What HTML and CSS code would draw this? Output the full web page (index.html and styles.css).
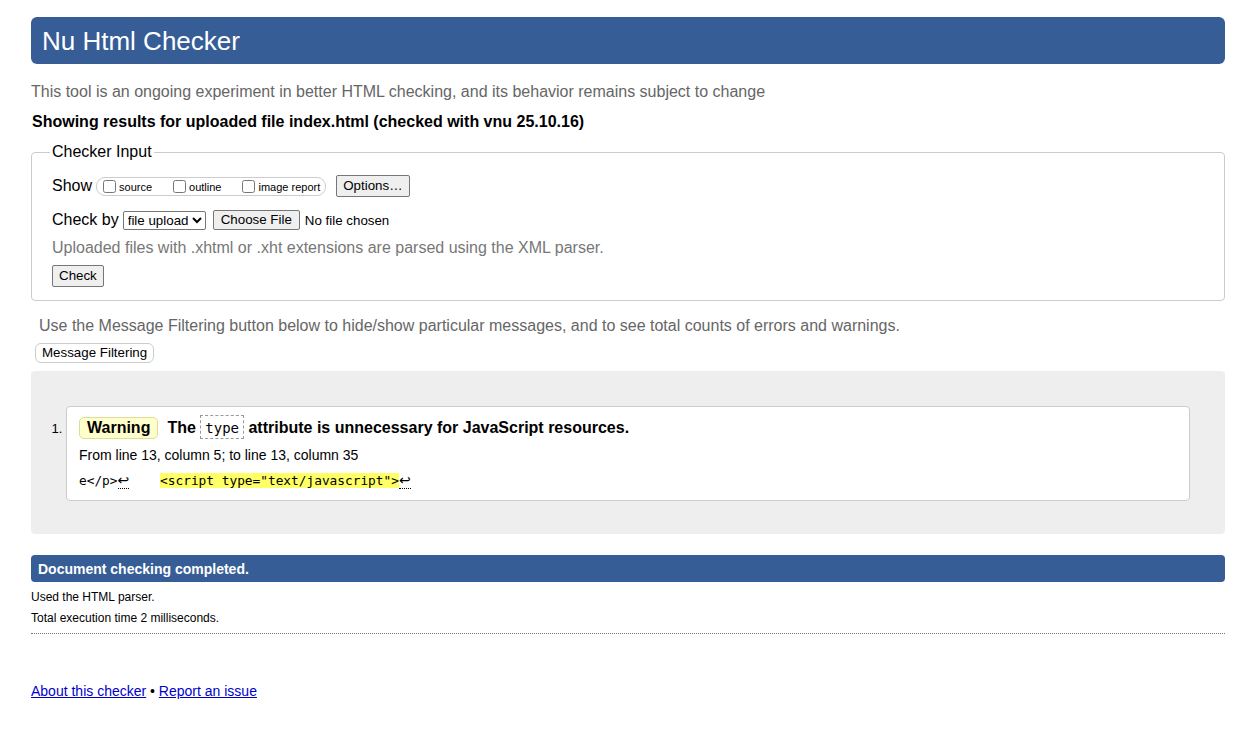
FILE: index.html
```html
<!DOCTYPE html>
<html lang="en">
<head>
<meta charset="utf-8">
<title>Showing results for index.html - Nu Html Checker</title>
<link rel="stylesheet" href="styles.css">
</head>
<body>
<header class="masthead"><h1>Nu Html Checker</h1></header>
<p class="intro">This tool is an ongoing experiment in better HTML checking, and its behavior remains subject to change</p>
<p class="showing">Showing results for uploaded file index.html (checked with vnu 25.10.16)</p>
<fieldset class="input">
  <legend>Checker Input</legend>
  <div class="row">
    <span class="lbl">Show</span>
    <span class="group">
      <label><input type="checkbox">source</label>
      <label><input type="checkbox">outline</label>
      <label><input type="checkbox">image report</label>
    </span>
    <button class="btn">Options…</button>
  </div>
  <div class="row row2">
    <span class="lbl">Check by</span>
    <select class="sel"><option>file upload</option></select>
    <span class="btn file">Choose File</span>
    <span class="nofile">No file chosen</span>
  </div>
  <p class="note">Uploaded files with .xhtml or .xht extensions are parsed using the XML parser.</p>
  <button class="btn check">Check</button>
</fieldset>
<p class="filter-note">Use the Message Filtering button below to hide/show particular messages, and to see total counts of errors and warnings.</p>
<button class="btn filter">Message Filtering</button>
<div class="results">
  <ol>
    <li class="msg">
      <p class="title"><span class="badge">Warning</span><span class="text">The <code>type</code> attribute is unnecessary for JavaScript resources.</span></p>
      <p class="loc">From line 13, column 5; to line 13, column 35</p>
      <p class="extract"><code>e&lt;/p&gt;<span class="lf">↩</span><span class="sp">    </span><b>&lt;script type="text/javascript"&gt;</b><span class="lf">↩</span></code></p>
    </li>
  </ol>
</div>
<p class="done">Document checking completed.</p>
<p class="details">Used the HTML parser.</p>
<p class="details last">Total execution time 2 milliseconds.</p>
<p class="footer"><a href="#">About this checker</a> • <a href="#">Report an issue</a></p>
</body>
</html>
```
FILE: styles.css
```css
html { background: #fff; }
body {
  margin: 0;
  padding: 17px 30px 0 31px;
  font-family: "Liberation Sans", Arial, sans-serif;
  color: #000;
}
.masthead {
  background: #365d95;
  border-radius: 6px;
  height: 47px;
  display: flex;
  align-items: center;
  padding-left: 11px;
}
.masthead h1 {
  margin: 0;
  color: #fff;
  font-weight: normal;
  font-size: 26px;
  line-height: 30px;
}
.intro {
  margin: 18px 0 0 0;
  color: #666;
  font-size: 16px;
  line-height: 20px;
}
.showing {
  margin: 10px 0 0 1px;
  font-weight: bold;
  font-size: 16px;
  line-height: 20px;
}
.input {
  margin: 11px 0 0 0;
  border: 1px solid #ccc;
  border-radius: 4px;
  padding: 9px 20px 13px 20px;
  min-width: 0;
}
.input legend {
  font-size: 16px;
  padding: 0 2px;
  margin-left: -2px;
  line-height: 18px;
}
.row {
  display: flex;
  align-items: center;
  height: 22px;
  margin-top: 5px;
}
.row2 { margin-top: 12px; }
.lbl { font-size: 16px; margin-right: 4px; }
.group {
  display: inline-flex;
  align-items: center;
  border: 1px solid #ccc;
  border-radius: 9px;
  height: 17px;
  padding: 0 5px 0 4px;
  margin-right: 10px;
}
.group label {
  font-size: 11px;
  display: inline-flex;
  align-items: center;
  margin-right: 19px;
  line-height: 13px;
  padding-top: 2px;
}
.group label:last-child { margin-right: 0; }
.group input {
  width: 13px;
  height: 13px;
  margin: 0 3px 2px 2px;
}
.btn {
  font-family: "Liberation Sans", Arial, sans-serif;
  font-size: 13.333px;
  background: #efefef;
  border: 1px solid #767676;
  border-radius: 2px;
  padding: 2px 6px;
  color: #000;
  line-height: 16px;
  display: inline-block;
}
.sel {
  font-family: "Liberation Sans", Arial, sans-serif;
  font-size: 13.333px;
  height: 19px;
  padding: 0;
  margin: 0 7px 0 0;
  border: 1px solid #767676;
  border-radius: 2px;
  background: #fff;
  color: #000;
}
.file { margin-right: 5px; padding: 1px 7px; }
.nofile { font-size: 13.333px; }
.note {
  margin: 7px 0 0 0;
  color: #777;
  font-size: 16px;
  line-height: 20px;
}
.check { margin-top: 7px; }
.filter-note {
  margin: 15px 0 0 8px;
  color: #666;
  font-size: 16px;
  line-height: 20px;
}
.filter {
  margin: 7px 0 0 4px;
  background: #fff;
  border: 1px solid #ccc;
  border-radius: 6px;
  padding: 1px 6px;
  display: block;
}
.results {
  margin-top: 8px;
  background: #eee;
  border-radius: 4px;
  padding: 35px 35px 33px 20px;
}
.results ol {
  margin: 0;
  padding: 0 0 0 15px;
  font-size: 13px;
}
.msg {
  background: #fff;
  border: 1px solid #ccc;
  border-radius: 4px;
  padding: 10px 12px 10px 12px;
}
.msg::marker { content: "1. "; font-size: 13px; }
.msg p { margin: 0; }
.title {
  display: flex;
  align-items: center;
  font-size: 16px;
  font-weight: bold;
  line-height: 22px;
}
.badge {
  background: #ffc;
  border: 1px solid #dddd99;
  border-radius: 5px;
  padding: 0 7px;
  line-height: 20px;
  margin-right: 9px;
}
.title code {
  font-family: "DejaVu Sans Mono", monospace;
  font-weight: normal;
  font-size: 14px;
  border: 1px dashed #999;
  padding: 4px 4px 2px 4px;
  margin: 0 0 0 0;
  line-height: 18px;
}
.loc {
  font-size: 14px;
  line-height: 18px;
  margin-top: 7px !important;
}
.extract {
  margin-top: 7px !important;
  font-size: 13px;
  line-height: 18px;
}
.extract code {
  font-family: "DejaVu Sans Mono", monospace;
  font-size: 12.8px;
  white-space: pre;
}
.extract b {
  font-weight: normal;
  background: #ff6;
}
.lf {
  border-bottom: 1px dotted #000;
  font-family: "DejaVu Sans", sans-serif;
  font-size: 14px;
}
.sp { white-space: pre; }
.done {
  margin: 21px 0 0 0;
  background: #365d95;
  color: #fff;
  font-weight: bold;
  font-size: 14px;
  border-radius: 4px;
  height: 27px;
  line-height: 28px;
  padding-left: 7px;
}
.details {
  margin: 8px 0 0 0;
  font-size: 12px;
  line-height: 15px;
}
.last {
  margin-top: 6px;
  padding-bottom: 7px;
  border-bottom: 1px dotted #777;
}
.footer {
  margin: 49px 0 0 0;
  font-size: 14px;
  line-height: 17px;
}
.footer a { color: #00c; }
```
